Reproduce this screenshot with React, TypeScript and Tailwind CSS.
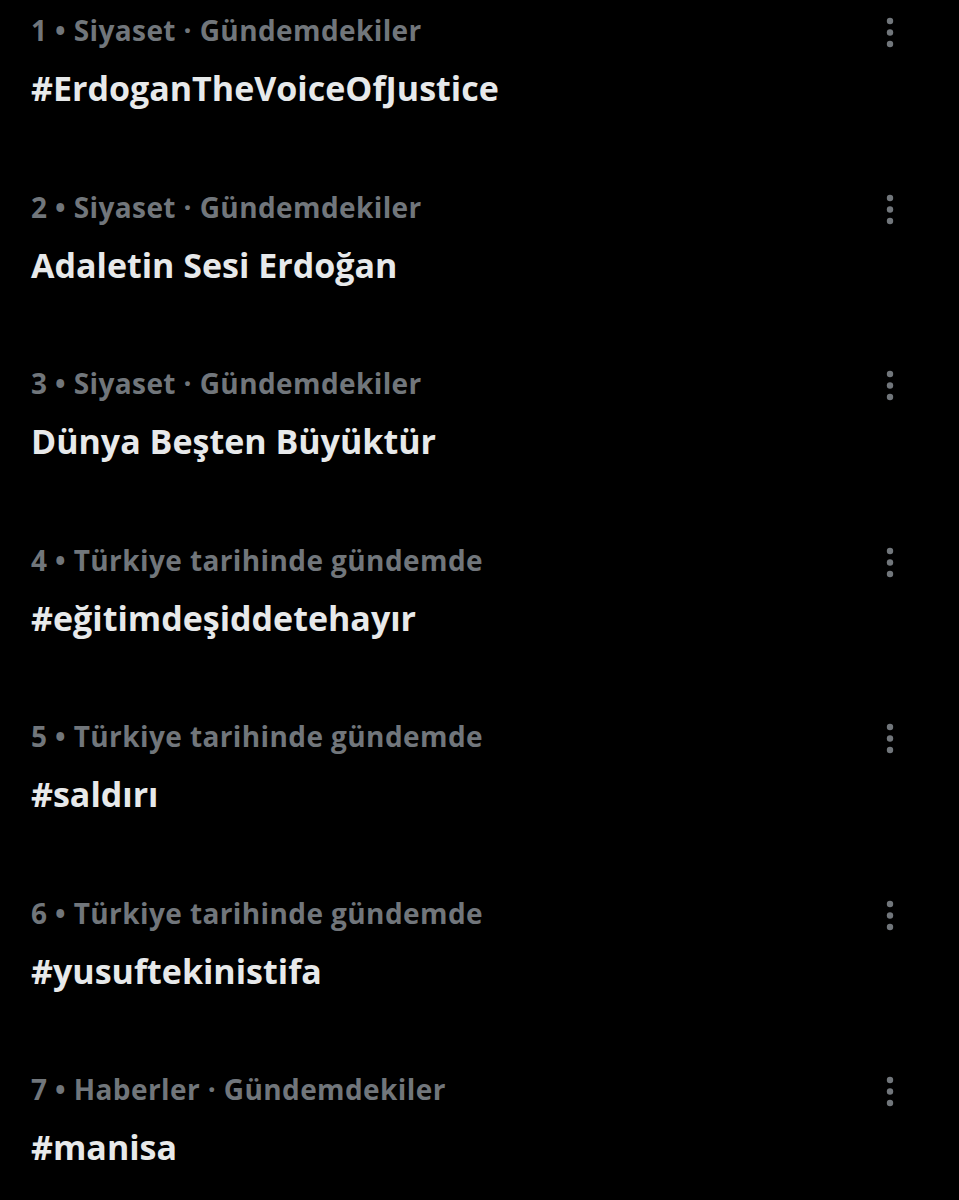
import React from "react";

const trends = [
  { n: 1, meta: "Siyaset · Gündemdekiler", title: "#ErdoganTheVoiceOfJustice" },
  { n: 2, meta: "Siyaset · Gündemdekiler", title: "Adaletin Sesi Erdoğan" },
  { n: 3, meta: "Siyaset · Gündemdekiler", title: "Dünya Beşten Büyüktür" },
  { n: 4, meta: "Türkiye tarihinde gündemde", title: "#eğitimdeşiddetehayır" },
  { n: 5, meta: "Türkiye tarihinde gündemde", title: "#saldırı" },
  { n: 6, meta: "Türkiye tarihinde gündemde", title: "#yusuftekinistifa" },
  { n: 7, meta: "Haberler · Gündemdekiler", title: "#manisa" },
];

function MoreIcon() {
  return (
    <svg width="20" height="40" viewBox="0 0 20 40" fill="#71767b">
      <circle cx="10" cy="9" r="3.2" />
      <circle cx="10" cy="20.5" r="3.2" />
      <circle cx="10" cy="32" r="3.2" />
    </svg>
  );
}

export default function App() {
  return (
    <div
      className="min-h-[1200px] w-full bg-black"
      style={{ fontFamily: '"Open Sans", "Noto Sans", sans-serif' }}
    >
      {trends.map((t) => (
        <div key={t.n} className="flex h-[176.5px] items-start justify-between pl-[31px] pr-[59px]">
          <div className="flex flex-col pt-[14px]">
            <div className="text-[28px] font-bold leading-[32px] tracking-[0.4px] text-[#71767b]">
              {t.n} • {t.meta}
            </div>
            <div className="mt-[22px] text-[34px] font-bold leading-[40px] text-[#e7e9ea]">
              {t.title}
            </div>
          </div>
          <div className="pt-[12px]">
            <MoreIcon />
          </div>
        </div>
      ))}
    </div>
  );
}
